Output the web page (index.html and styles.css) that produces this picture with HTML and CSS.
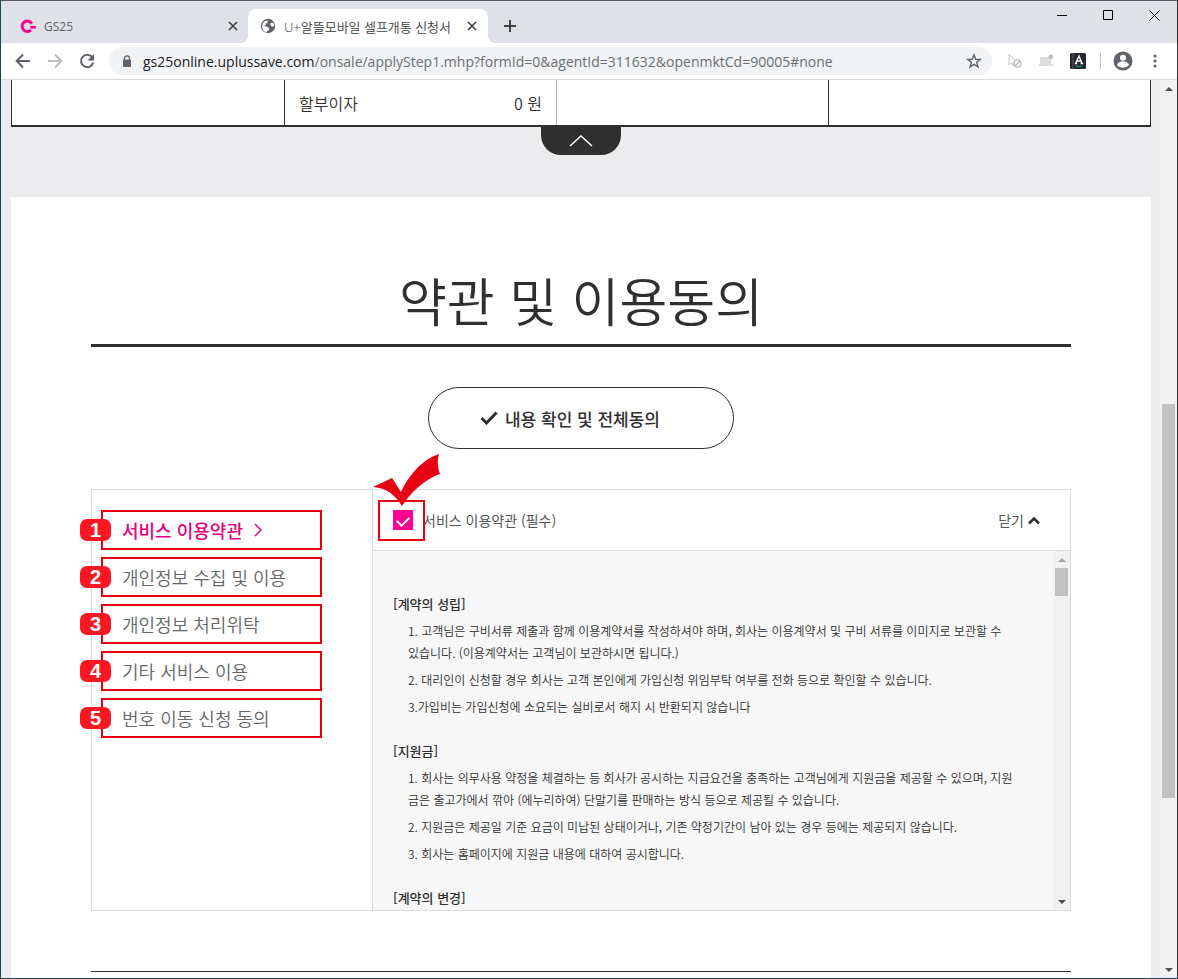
FILE: index.html
```html
<!DOCTYPE html>
<html lang="ko">
<head>
    <meta charset="UTF-8">
    <meta name="viewport" content="width=device-width, initial-scale=1.0">
    <title>U+알뜰모바일 셀프개통 신청서</title>
    <link rel="stylesheet" href="styles.css">
</head>
<body>
<div class="window">
    <!-- 탭 -->
    <div class="tab-strip">
        <div class="tab">
            <svg class="favicon" width="16" height="16" viewBox="0 0 16 16"><path d="M11.8 5.600A5.200 5.200 0 1 0 11 12" fill="none" stroke="#ff0090" stroke-width="3"/><path d="M10.300 9.300h5.500" stroke="#ff0090" stroke-width="2.600"/></svg>
            <span class="tab-title">GS25</span>
            <button class="tab-close" aria-label="탭 닫기"><svg width="10" height="10" viewBox="0 0 10 10"><path d="M1 1l8 8M9 1l-8 8" stroke="#3c4043" stroke-width="1.6"/></svg></button>
        </div>
        <div class="tab active">
            <svg class="favicon" width="16" height="16" viewBox="0 0 16 16"><circle cx="8" cy="8" r="7.2" fill="#5f6368"/><path d="M7.500 2.500l.5 1.800-2 1.300-.5 1.700-2 .8 4 .6 1.900 1.800-.8 2-1.500.5-.3 1.500A5.800 5.800 0 0 1 2.200 8L2.600 5.800A5.500 5.500 0 0 1 7.500 2.500zM10.500 5l2.800-.2 1 3-2 1-1.800-1.300z" fill="#fff"/></svg>
            <span class="tab-title">U+알뜰모바일 셀프개통 신청서</span>
            <button class="tab-close" aria-label="탭 닫기"><svg width="10" height="10" viewBox="0 0 10 10"><path d="M1 1l8 8M9 1l-8 8" stroke="#3c4043" stroke-width="1.6"/></svg></button>
        </div>
        <button class="new-tab" aria-label="새 탭"><svg width="12" height="12" viewBox="0 0 12 12"><path d="M6 0v12M0 6h12" stroke="#3c4043" stroke-width="2"/></svg></button>
        <div class="window-controls">
            <button aria-label="최소화"><svg width="11" height="11" viewBox="0 0 11 11"><path d="M0 5.5h10" stroke="#000"/></svg></button>
            <button aria-label="최대화"><svg width="11" height="11" viewBox="0 0 11 11"><path d="M.5.5h9v9h-9z" fill="none" stroke="#000"/></svg></button>
            <button aria-label="닫기"><svg width="11" height="11" viewBox="0 0 11 11"><path d="M.5.5l10 10M10.500.5l-10 10" stroke="#000"/></svg></button>
        </div>
    </div>

    <!-- 주소창 -->
    <div class="toolbar">
        <button aria-label="뒤로"><svg width="16" height="16" viewBox="0 0 16 16"><path d="M15 8H2M8 1.500L1.700 8 8 14.500" fill="none" stroke="#5f6368" stroke-width="2"/></svg></button>
        <button aria-label="앞으로"><svg width="16" height="16" viewBox="0 0 16 16"><path d="M1 8h13M8 1.500L14.300 8 8 14.500" fill="none" stroke="#bbbdbf" stroke-width="2"/></svg></button>
        <button aria-label="새로고침"><svg width="16" height="16" viewBox="0 0 16 16"><path d="M13 4A6.200 6.200 0 1 0 14.200 9.500" fill="none" stroke="#5f6368" stroke-width="2"/><path d="M15 1v6.500H8.500z" fill="#5f6368"/></svg></button>
        <div class="address">
            <svg width="10" height="13" viewBox="0 0 10 13"><path d="M1.500 5h7v6.500h-7z" fill="#5f6368" stroke="#5f6368" stroke-linejoin="round"/><path d="M2.500 5V3.300a2.500 2.500 0 0 1 5 0V5" fill="none" stroke="#5f6368" stroke-width="1.300"/></svg>
            <span class="url"><b>gs25online.uplussave.com</b>/onsale/applyStep1.mhp?formId=0&amp;agentId=311632&amp;openmktCd=90005#none</span>
            <svg width="16" height="16" viewBox="0 0 16 16"><path d="M8 1.800l1.700 4.400 4.700.2-3.700 2.900 1.300 4.600L8 11.300l-4 2.600 1.300-4.600L1.600 6.400l4.700-.2z" fill="none" stroke="#5f6368" stroke-width="1.400"/></svg>
        </div>
        <svg width="14" height="16" viewBox="0 0 14 16"><path d="M1 1v11l2.500-2 1.500 3 1.500-.8L5 9.500l3-.5z" fill="#fff" stroke="#c4c6c8"/><circle cx="9.500" cy="10.500" r="3.600" fill="#fff" stroke="#b4b6b8" stroke-width="1.300"/><path d="M7 13l5-5" stroke="#b4b6b8" stroke-width="1.300"/></svg>
        <svg width="16" height="14" viewBox="0 0 16 14"><path d="M2 3h11v7H2zM1 10h14l.8 2H.2z" fill="#dcdcdc"/><circle cx="12.800" cy="2.800" r="2.400" fill="#bbb"/></svg>
        <svg width="16" height="16" viewBox="0 0 16 16"><rect width="16" height="16" rx="1.500" fill="#252633"/><path d="M3 0v16" stroke="#555a68"/><path d="M5.500 10.500L9 3l3 7.500M7 8h4.300M4.800 10.500h2.400M10.500 10.500h2.700" fill="none" stroke="#fff" stroke-width="1.300"/><path d="M6 13.300h6" stroke="#17b34a"/></svg>
        <span class="toolbar-divider"></span>
        <button class="profile" aria-label="프로필"><svg width="20" height="20" viewBox="0 0 20 20"><circle cx="10" cy="10" r="9.500" fill="#5f6368"/><circle cx="10" cy="6.800" r="3" fill="#fff"/><path d="M4 14c1-5 11-5 12 0-3 3.500-9 3.500-12 0z" fill="#fff"/></svg></button>
        <button aria-label="메뉴"><svg width="4" height="14" viewBox="0 0 4 14"><g fill="#5f6368"><circle cx="2" cy="2" r="1.600"/><circle cx="2" cy="7" r="1.600"/><circle cx="2" cy="12" r="1.600"/></g></svg></button>
    </div>

    <div class="viewport">
        <main class="page">
            <table class="price-table">
                <tr>
                    <td></td>
                    <td><div class="price"><span>할부이자</span><span>0 원</span></div></td>
                    <td></td>
                    <td></td>
                </tr>
            </table>
            <button class="fold" aria-label="접기"><svg width="24" height="12" viewBox="0 0 24 12"><path d="M1 11L12 1l11 10" fill="none" stroke="#fff" stroke-width="1.500"/></svg></button>

            <section class="terms">
                <h1>약관 및 이용동의</h1>
                <button class="agree-all">
                    <svg width="18" height="14" viewBox="0 0 18 14"><path d="M1.500 7l5 5L16.500 1.500" fill="none" stroke="#2f2f2f" stroke-width="3"/></svg>
                    내용 확인 및 전체동의
                </button>

                <div class="terms-box">
                    <nav class="terms-nav">
                        <a href="#none" class="on"><span class="num">1</span>서비스 이용약관 <svg width="8" height="14" viewBox="0 0 8 14"><path d="M1 1l6 6-6 6" fill="none" stroke="#e6007e" stroke-width="1.500"/></svg></a>
                        <a href="#none"><span class="num">2</span>개인정보 수집 및 이용</a>
                        <a href="#none"><span class="num">3</span>개인정보 처리위탁</a>
                        <a href="#none"><span class="num">4</span>기타 서비스 이용</a>
                        <a href="#none"><span class="num">5</span>번호 이동 신청 동의</a>
                    </nav>
                    <div class="terms-detail">
                        <div class="terms-head">
                            <input type="checkbox" id="agree1" checked>
                            <label for="agree1">서비스 이용약관 (필수)</label>
                            <button class="close-terms">닫기 <svg width="12" height="9" viewBox="0 0 12 9"><path d="M1 7.500l5-5 5 5" fill="none" stroke="#2f2f2f" stroke-width="2.500"/></svg></button>
                            <span class="mark-box"></span>
                            <svg class="mark-check" width="68" height="52" viewBox="0 0 68 52"><path d="M0 33L19 24 28 38C35 23 48 6 66 0Q63 10 67 20C52 25 38 38 29 52 22 41 14 34 0 33z" fill="#e60012"/></svg>
                        </div>
                        <div class="terms-scroll">
                            <div class="terms-text">
                                <h2>[계약의 성립]</h2>
                                <p>1. 고객님은 구비서류 제출과 함께 이용계약서를 작성하셔야 하며, 회사는 이용계약서 및 구비 서류를 이미지로 보관할 수<br>있습니다. (이용계약서는 고객님이 보관하시면 됩니다.)</p>
                                <p>2. 대리인이 신청할 경우 회사는 고객 본인에게 가입신청 위임부탁 여부를 전화 등으로 확인할 수 있습니다.</p>
                                <p>3.가입비는 가입신청에 소요되는 실비로서 해지 시 반환되지 않습니다</p>
                                <h2>[지원금]</h2>
                                <p>1. 회사는 의무사용 약정을 체결하는 등 회사가 공시하는 지급요건을 충족하는 고객님에게 지원금을 제공할 수 있으며, 지원<br>금은 출고가에서 깎아 (에누리하여) 단말기를 판매하는 방식 등으로 제공될 수 있습니다.</p>
                                <p>2. 지원금은 제공일 기준 요금이 미납된 상태이거나, 기존 약정기간이 남아 있는 경우 등에는 제공되지 않습니다.</p>
                                <p>3. 회사는 홈페이지에 지원금 내용에 대하여 공시합니다.</p>
                                <h2>[계약의 변경]</h2>
                            </div>
                            <div class="scrollbar at-top">
                                <span class="arrow up"></span>
                                <span class="thumb"></span>
                                <span class="rest"></span>
                                <span class="arrow down"></span>
                            </div>
                        </div>
                    </div>
                </div>
                <hr>
            </section>
        </main>
        <div class="scrollbar page-scroll">
            <span class="arrow up"></span>
            <span class="before"></span>
            <span class="thumb"></span>
            <span class="rest"></span>
            <span class="arrow down"></span>
        </div>
    </div>
</div>
</body>
</html>
```
FILE: styles.css
```css
* {
    box-sizing: border-box;
}

body {
    margin: 0;
    color: #2f2f2f;
    font-family: "Noto Sans CJK KR", sans-serif;
    font-weight: 350;
}

button {
    padding: 0;
    border: 0;
    background: none;
    color: inherit;
    font: inherit;
    cursor: pointer;
}

svg {
    display: block;
    flex: none;
}

.window {
    display: flex;
    flex-direction: column;
    height: 100vh;
    border: 1px solid #1f4456;
    border-top-color: #5b5964;
    border-right-color: #333;
}

/* 탭 */
.tab-strip {
    display: flex;
    height: 42px;
    padding-top: 8px;
    background: #dee1e6;
}

.tab {
    display: flex;
    align-items: center;
    width: 247px;
    padding: 0 8px 0 19px;
    color: #5f6368;
    font-family: "Open Sans", "Noto Sans CJK KR", sans-serif;
    font-size: 12px;
    font-weight: 400;
}

.tab.active {
    position: relative;
    width: 240px;
    padding: 0 9px 0 12px;
    border-radius: 8px 8px 0 0;
    background: #fff;
    color: #3c4043;
    font-size: 13px;
    font-weight: 350;
}

.tab.active::before,
.tab.active::after {
    content: "";
    position: absolute;
    bottom: 0;
    width: 8px;
    height: 8px;
}

.tab.active::before {
    right: 100%;
    background: radial-gradient(circle at 0 0, transparent 8px, #fff 8px);
}

.tab.active::after {
    left: 100%;
    background: radial-gradient(circle at 100% 0, transparent 8px, #fff 8px);
}

.tab-title {
    flex: 1;
    margin-left: 8px;
    white-space: nowrap;
}

.tab-close {
    padding: 2px;
}

.new-tab {
    margin-left: 16px;
}

.window-controls {
    display: flex;
    gap: 35px;
    margin-left: auto;
    padding-right: 17px;
    height: 12px;
}

/* 주소창 */
.toolbar {
    display: flex;
    align-items: center;
    gap: 16px;
    height: 37px;
    padding: 0 20px 0 14px;
    border-bottom: 1px solid #d9d9dc;
    background: #fff;
}

.address {
    display: flex;
    flex: 1;
    align-items: center;
    gap: 11px;
    height: 28px;
    margin-left: -2px;
    padding: 0 10px 0 13px;
    border-radius: 14px;
    background: #f1f3f4;
}

.url {
    flex: 1;
    color: #6b6f73;
    font-family: "Open Sans", sans-serif;
    font-size: 14px;
    font-weight: 400;
    white-space: nowrap;
}

.url b {
    color: #202124;
    font-weight: 400;
}

.toolbar-divider {
    width: 1px;
    height: 16px;
    margin: 0 -4px 0 -2px;
    background: #c6c8cb;
}

.profile {
    margin-right: 4px;
}

/* 본문 */
.viewport {
    display: flex;
    flex: 1;
    min-height: 0;
    background: #ececee;
}

.page {
    flex: 1;
    padding: 0 9px 0 10px;
    overflow: hidden;
}

.price-table {
    width: 100%;
    height: 47px;
    border-collapse: separate;
    border-spacing: 0;
    border: 1px solid #2f2f2f;
    border-top: 0;
    border-bottom-width: 2px;
    background: #fff;
    table-layout: fixed;
    font-size: 16px;
}

.price-table td {
    width: 272px;
    padding: 0 14px;
    border-left: 1px solid #2f2f2f;
}

.price-table td:first-child {
    border-left: 0;
}

.price-table td:nth-child(3) {
    border-left-color: #b5b5b5;
}

.price-table td:last-child {
    width: auto;
}

.price {
    display: flex;
    justify-content: space-between;
}

.fold {
    display: flex;
    align-items: center;
    justify-content: center;
    width: 80px;
    height: 28px;
    margin: 0 auto 42px;
    border-radius: 0 0 20px 20px;
    background: #2f2f2f;
}

.terms {
    padding: 67px 80px 80px;
    background: #fff;
}

.terms h1 {
    margin: 0;
    padding-bottom: 8px;
    border-bottom: 3px solid #2f2f2f;
    font-size: 52px;
    font-weight: 350;
    line-height: 72px;
    text-align: center;
}

.agree-all {
    display: flex;
    align-items: center;
    justify-content: center;
    gap: 7px;
    width: 306px;
    height: 62px;
    margin: 40px auto;
    padding-right: 22px;
    border: 1px solid #2f2f2f;
    border-radius: 31px;
    font-size: 17px;
    font-weight: 500;
}

.terms-box {
    display: flex;
    border: 1px solid #dcdcdc;
}

.terms-nav {
    display: flex;
    flex-direction: column;
    gap: 7px;
    width: 280px;
    padding: 20px 50px 20px 9px;
}

.terms-nav a {
    position: relative;
    display: flex;
    align-items: center;
    height: 40px;
    padding-left: 19px;
    border: 2px solid #e60012;
    color: #666;
    font-size: 18px;
    text-decoration: none;
}

.terms-nav a.on {
    gap: 11px;
    color: #e6007e;
    font-weight: 500;
}

.num {
    position: absolute;
    top: 7px;
    left: -23px;
    width: 31px;
    height: 22px;
    border-radius: 7px;
    background: #ff1623;
    color: #fff;
    font-family: "Liberation Sans", sans-serif;
    font-size: 20px;
    font-weight: 700;
    line-height: 22px;
    text-align: center;
}

.terms-detail {
    flex: 1;
    min-width: 0;
    border-left: 1px solid #dcdcdc;
}

.terms-head {
    position: relative;
    display: flex;
    align-items: center;
    height: 61px;
    padding: 0 30px 0 20px;
    border-bottom: 1px solid #dcdcdc;
    color: #555;
    font-size: 14px;
    font-weight: 400;
}

.terms-head input {
    appearance: none;
    display: flex;
    justify-content: center;
    width: 20px;
    height: 20px;
    margin: 0 10px 0 0;
    background: #ff0090;
}

.terms-head input:checked::after {
    content: "";
    width: 6px;
    height: 10px;
    margin-top: 4px;
    border: solid #fff;
    border-width: 0 2px 2px 0;
    transform: rotate(45deg);
}

.close-terms {
    display: flex;
    align-items: center;
    gap: 4px;
    margin-left: auto;
}

/* 체크 표시 강조 */
.mark-box {
    position: absolute;
    top: 10px;
    left: 5px;
    width: 47px;
    height: 41px;
    border: 2px solid #e60012;
}

.mark-check {
    position: absolute;
    top: -36px;
    left: 0;
}

.terms-scroll {
    display: flex;
    background: #f7f7f7;
}

.terms-text {
    flex: 1;
    min-width: 0;
    padding: 42px 0 1px 20px;
    font-size: 12px;
    line-height: 22px;
    white-space: nowrap;
}

.terms-text h2 {
    margin: 22px 0 0;
    font-size: 13px;
    font-weight: 500;
}

.terms-text h2:first-child {
    margin-top: 0;
}

.terms-text p {
    margin: 5px 0 0 15px;
}

/* 스크롤바 */
.scrollbar {
    display: flex;
    flex: none;
    flex-direction: column;
    align-items: center;
    width: 17px;
    background: #f1f1f1;
}

.thumb {
    width: 13px;
    height: 28px;
    background: #c1c1c1;
}

.rest {
    flex: 1;
}

.page-scroll .before {
    flex: 307;
}

.page-scroll .thumb {
    flex: 394;
}

.page-scroll .rest {
    flex: 163;
}

.arrow {
    display: flex;
    align-items: center;
    justify-content: center;
    width: 17px;
    height: 17px;
}

.arrow::before {
    content: "";
    border: 4px solid transparent;
}

.arrow.up::before {
    border-top: 0;
    border-bottom-color: #505050;
}

.arrow.down::before {
    border-bottom: 0;
    border-top-color: #505050;
}

.at-top .up::before {
    border-bottom-color: #a3a3a3;
}

hr {
    margin: 60px 0 0;
    border: 0;
    border-top: 1px solid #2f2f2f;
}
```
